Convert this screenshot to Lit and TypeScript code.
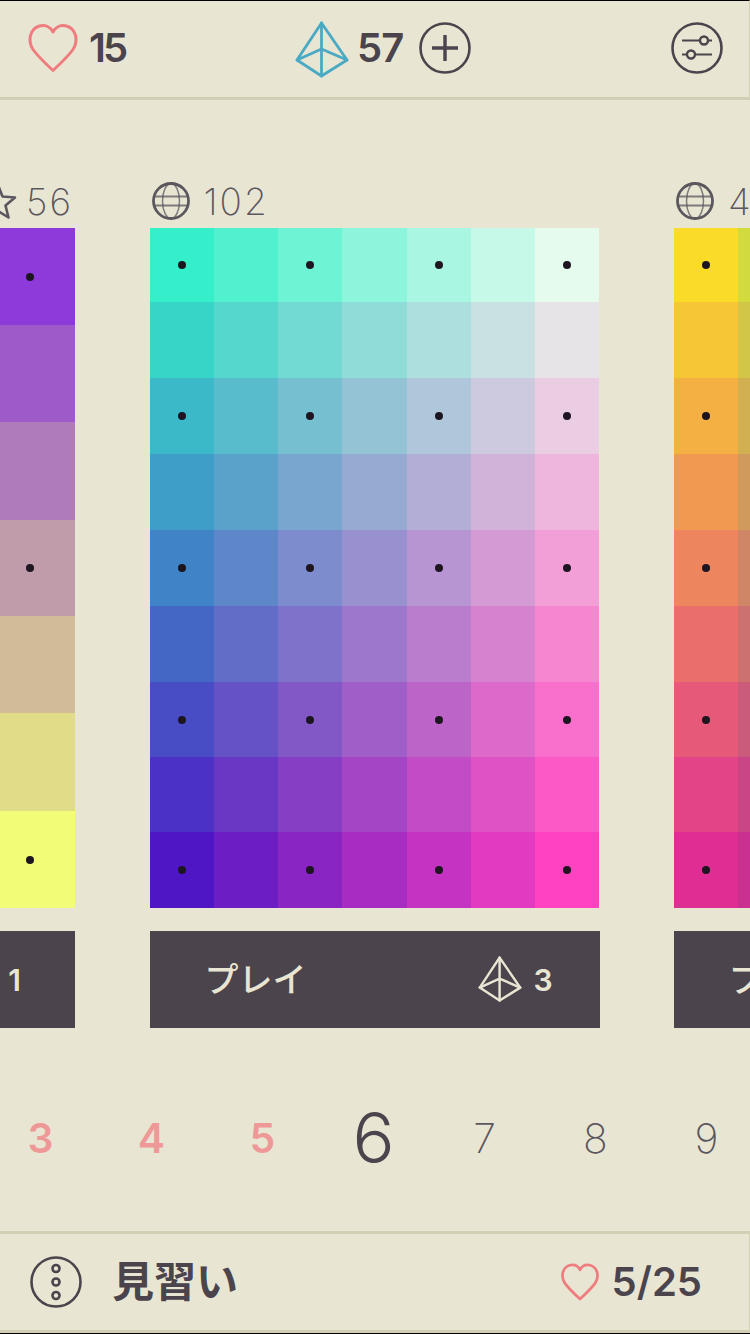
import { LitElement, html, css, svg } from "lit";
import { customElement } from "lit/decorators.js";

type RGB = [number, number, number];
interface Card {
  cols: number;
  rowHeights: number[];
  dotRowStep: number;
  tl: RGB;
  tr: RGB;
  bl: RGB;
  br: RGB;
  icon: "star" | "globe";
  count: string;
  cost: string;
  alignEnd?: boolean;
}

const nineRows = [74, 76, 76, 76, 76, 76, 75, 75, 76];
const sevenRows = [97, 97, 98, 96, 97, 98, 97];

const cards: Card[] = [
  { cols: 5, rowHeights: sevenRows, dotRowStep: 3, tl: [40, 70, 210], tr: [142, 58, 219], bl: [120, 230, 150], br: [242, 252, 118], icon: "star", count: "56", cost: "1", alignEnd: true },
  { cols: 7, rowHeights: nineRows, dotRowStep: 2, tl: [52, 239, 201], tr: [228, 251, 238], bl: [78, 22, 196], br: [255, 66, 192], icon: "globe", count: "102", cost: "3" },
  { cols: 7, rowHeights: nineRows, dotRowStep: 2, tl: [250, 220, 40], tr: [12, 215, 164], bl: [224, 45, 148], br: [86, 63, 118], icon: "globe", count: "48", cost: "3" },
];

const lerp = (a: number, b: number, t: number) => a + (b - a) * t;
function cellColor(c: Card, col: number, row: number): string {
  const x = c.cols > 1 ? col / (c.cols - 1) : 0;
  const y = row / (c.rowHeights.length - 1);
  const ch = [0, 1, 2].map((i) =>
    Math.round(lerp(lerp(c.tl[i], c.tr[i], x), lerp(c.bl[i], c.br[i], x), y))
  );
  return `rgb(${ch[0]},${ch[1]},${ch[2]})`;
}

const heartPath = "M25 47.5C18 41 10 33.5 5 26.5C-.5 18 1.5 6 11.5 3C17.5 1.5 22.5 4 25 9C27.5 4 32.5 1.5 38.5 3C48.5 6 50.5 18 45 26.5C40 33.5 32 41 25 47.5Z";

const heart = (cls: string) => html`<svg class=${cls} viewBox="0 0 50 50" fill="none" stroke="currentColor" stroke-linejoin="round">${svg`<path d=${heartPath} />`}</svg>`;

const pyramid = (cls: string) => html`<svg class=${cls} viewBox="0 0 54 58" fill="none" stroke="currentColor" stroke-linejoin="round" stroke-linecap="round">${svg`
  <path d="M26.5 2L2 39L26.5 55L52 39Z" />
  <path d="M26.5 2V55M2 39L26.5 28L52 39" />`}</svg>`;

const plusIcon = html`<svg class="ic52" viewBox="0 0 52 52" fill="none" stroke="currentColor" stroke-width="2.6">${svg`
  <circle cx="26" cy="26" r="24.5" />
  <path d="M13 26H39M26 13V39" stroke-width="3.4" />`}</svg>`;

const slidersIcon = html`<svg class="ic52" viewBox="0 0 52 52" fill="none" stroke="currentColor" stroke-width="2.6">${svg`
  <circle cx="26" cy="26" r="24.5" />
  <path d="M11 18.5H28.5M37.5 18.5H41M11 32.5H15.5M24.5 32.5H41" stroke-width="2" />
  <circle cx="33" cy="18.5" r="4" stroke-width="2.4" />
  <circle cx="20" cy="32.5" r="4" stroke-width="2.4" />`}</svg>`;

const moreIcon = html`<svg class="ic52" viewBox="0 0 52 52" fill="none" stroke="currentColor" stroke-width="2.6">${svg`
  <circle cx="26" cy="26" r="24.5" />
  <circle cx="26" cy="12.5" r="3.5" />
  <circle cx="26" cy="26" r="3.5" />
  <circle cx="26" cy="39.5" r="3.5" />`}</svg>`;

const globeIcon = html`<svg class="ic38" viewBox="0 0 38 38" fill="none" stroke="currentColor">${svg`
  <circle cx="19" cy="19" r="17.5" stroke-width="2.8" />
  <ellipse cx="19" cy="19" rx="8.5" ry="17.5" stroke-width="1.5" opacity=".75" />
  <path d="M3 14.5H35M3 23.5H35" stroke-width="2" opacity=".75" />`}</svg>`;

const starIcon = html`<svg class="ic38" viewBox="0 0 38 38" fill="none" stroke="currentColor" stroke-width="2.6" stroke-linejoin="round">${svg`
  <path d="M19 3L23.5 14.5L36 15.5L26.5 23.5L29.5 35.5L19 29L8.5 35.5L11.5 23.5L2 15.5L14.5 14.5Z" />`}</svg>`;

@customElement("app-root")
export class AppRoot extends LitElement {
  static styles = css`
    :host {
      display: flex;
      flex-direction: column;
      width: 750px;
      height: 1334px;
      overflow: hidden;
      background: #e8e6d2;
      color: #4b444d;
      font-family: "Inter", "Noto Sans CJK JP", sans-serif;
    }
    svg { display: block; flex: none; }
    .ic52 { width: 52px; height: 52px; }
    .ic38 { width: 38px; height: 38px; }

    .bar {
      display: flex;
      align-items: center;
      flex: none;
      box-sizing: border-box;
      border-right: 1px solid #d2cfb4;
    }
    .top {
      height: 100px;
      border-top: 1px solid #000;
      border-bottom: 3px solid #d2cfb4;
      padding: 0 26px 3px 27px;
    }
    .group { display: flex; align-items: center; }
    .stat {
      font-size: 40px;
      font-weight: 600;
      line-height: 1;
      letter-spacing: -1px;
    }
    .stat.tight { letter-spacing: -3px; }
    .stat.wide { letter-spacing: 0; }
    .left { flex: none; width: 98px; }
    .heart-lg { width: 52px; height: 50px; color: #ef7d7f; stroke-width: 3; margin-right: 10px; }
    .pyr-lg { width: 54px; height: 58px; color: #4aa9c3; stroke-width: 2.8; margin: 2px 8px -2px 0; }
    .center { margin-left: 170px; }
    .center .ic52 { margin-left: 16px; }
    .push { margin-left: auto; }

    .main { flex: 1; display: flex; flex-direction: column; min-height: 0; }
    .track {
      display: flex;
      gap: 74.5px;
      margin-left: -375px;
      padding-top: 82px;
    }
    .card { flex: none; width: 450px; }
    .label {
      display: flex;
      align-items: center;
      height: 38px;
      margin-bottom: 8px;
      padding: 0 2px;
      color: #5c565e;
    }
    .label.end { justify-content: flex-end; }
    .count {
      font-size: 37px;
      font-weight: 200;
      letter-spacing: 2px;
      line-height: 1;
      margin-left: 14px;
      color: #5c565e;
    }
    .label.end .count { margin-left: 9px; }
    .grid { display: grid; width: 450px; height: 680px; }
    .cell { display: flex; align-items: center; justify-content: center; }
    .dot { width: 8px; height: 8px; border-radius: 50%; background: #1d1620; }
    .play {
      display: flex;
      align-items: center;
      height: 97px;
      margin-top: 23px;
      padding: 0 47px 0 55px;
      background: #4b444d;
      color: #e8e6d2;
    }
    .card.narrow .play { padding-right: 54px; }
    .play-text { font-size: 34px; font-weight: 500; letter-spacing: 0; line-height: 1; }
    .pyr-sm { width: 44px; height: 47px; stroke-width: 3; margin-left: auto; margin-right: 11px; }
    .cost { font-size: 30px; font-weight: 600; line-height: 1; }

    .levels { flex: 1; display: flex; align-items: center; margin-left: -15px; padding-top: 17px; }
    .lv {
      flex: none;
      width: 111px;
      text-align: center;
      font-size: 41px;
      line-height: 1;
      font-weight: 200;
      color: #5c565e;
    }
    .lv.done { color: #ee9998; font-weight: 600; }
    .lv.now { font-size: 70px; font-weight: 300; color: #4b444d; }

    .bottom {
      height: 103px;
      border-top: 3px solid #d2cfb4;
      border-bottom: 4px solid #d2cfb4;
      padding: 0 47px 0 30px;
      position: relative;
    }
    .bottom::after {
      content: "";
      position: absolute;
      left: 0;
      right: -1px;
      bottom: -4px;
      height: 1px;
      background: #000;
    }
    .rank { font-size: 42px; font-weight: 700; line-height: 1; margin-left: 30px; }
    .heart-sm { width: 38px; height: 38px; color: #ef7d7f; stroke-width: 3.6; margin-right: 13px; }
  `;

  private renderCard(c: Card) {
    const cells = [];
    const rows = c.rowHeights.length;
    for (let r = 0; r < rows; r++) {
      for (let k = 0; k < c.cols; k++) {
        const hasDot = r % c.dotRowStep === 0 && k % 2 === 0;
        cells.push(html`<div class="cell" style="background:${cellColor(c, k, r)}">${hasDot ? html`<div class="dot"></div>` : ""}</div>`);
      }
    }
    const rowsCss = c.rowHeights.map((h) => `${h}px`).join(" ");
    return html`<div class="card ${c.alignEnd ? "narrow" : ""}">
      <div class="label ${c.alignEnd ? "end" : ""}">
        ${c.icon === "star" ? starIcon : globeIcon}
        <span class="count">${c.count}</span>
      </div>
      <div class="grid" style="grid-template-columns:repeat(${c.cols},1fr);grid-template-rows:${rowsCss}">${cells}</div>
      <div class="play">
        <span class="play-text">プレイ</span>
        ${pyramid("pyr-sm")}
        <span class="cost">${c.cost}</span>
      </div>
    </div>`;
  }

  render() {
    return html`
      <div class="bar top">
        <div class="group left">${heart("heart-lg")}<span class="stat tight">15</span></div>
        <div class="group center">${pyramid("pyr-lg")}<span class="stat">57</span>${plusIcon}</div>
        <div class="group push">${slidersIcon}</div>
      </div>
      <div class="main">
        <div class="track">${cards.map((c) => this.renderCard(c))}</div>
        <div class="levels">
          ${[3, 4, 5].map((n) => html`<div class="lv done">${n}</div>`)}
          <div class="lv now">6</div>
          ${[7, 8, 9].map((n) => html`<div class="lv">${n}</div>`)}
        </div>
      </div>
      <div class="bar bottom">
        <div class="group">${moreIcon}<span class="rank">見習い</span></div>
        <div class="group push">${heart("heart-sm")}<span class="stat wide">5/25</span></div>
      </div>
    `;
  }
}
